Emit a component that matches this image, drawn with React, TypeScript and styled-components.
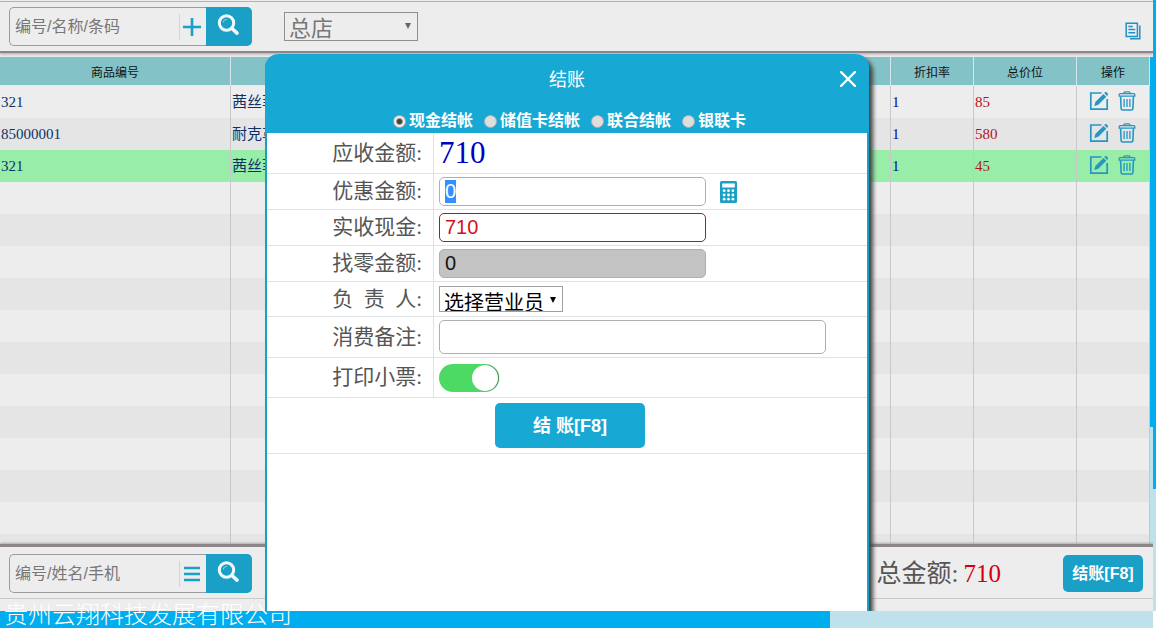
import React, { useEffect, useRef, useState } from "react";
import styled, { createGlobalStyle } from "styled-components";

const sans = `"Liberation Sans", "Noto Sans CJK SC", sans-serif`;
const serif = `"Liberation Serif", "Noto Sans CJK SC", serif`;

const GlobalStyle = createGlobalStyle`
  * { box-sizing: border-box; }
  body { margin: 0; font-family: ${sans}; background: #fff; overflow: hidden; }
  button, input, select { font-family: inherit; margin: 0; }
  button { border: 0; padding: 0; background: none; cursor: pointer; }
`;

const Page = styled.div`
  position: relative;
  display: grid;
  grid-template-columns: minmax(0, 1fr) 3px;
  grid-template-rows: minmax(0, 1fr) 17px;
  height: 100vh;
`;

const Main = styled.main`
  position: relative;
  display: flex;
  flex-direction: column;
  min-height: 0;
  overflow: hidden;
  background: #ededed;
`;

const ScrollTrack = styled.div<{ $vertical?: boolean }>`
  display: flex;
  flex-direction: ${(p) => (p.$vertical ? "column" : "row")};
  background: #bfe1eb;
`;

const ScrollThumb = styled.div<{ $share: number }>`
  flex: 0 0 ${(p) => p.$share}%;
  background: #00adef;
`;

const TopBar = styled.header`
  position: relative;
  display: flex;
  flex: none;
  align-items: flex-start;
  height: 53px;
  padding: 6px 11px 0 9px;
  margin-bottom: 4px;
  border-top: 1px solid #ededed;
  border-bottom: 2px solid #8c8688;
  background: #ededed;
  box-shadow: inset 0 1px #aeb4b4, 0 1px 3px #a8a0a2;
`;

const SearchGroup = styled.form`
  display: flex;
  width: 243px;
  height: 39px;
`;

const SearchBox = styled.div`
  display: flex;
  flex: 1;
  align-items: center;
  min-width: 0;
  border: 1px solid #9a9c9e;
  border-right: 0;
  border-radius: 5px 0 0 5px;
`;

const SearchInput = styled.input`
  flex: 1;
  min-width: 0;
  padding: 0 5px;
  border: 0;
  outline: 0;
  background: none;
  font-size: 16px;
  &::placeholder { color: #777; opacity: 1; }
`;

const InnerButton = styled.button`
  display: flex;
  align-items: center;
  justify-content: center;
  width: 27px;
  height: 26px;
  padding-right: 2px;
  border-left: 1px solid #d4d4d4;
`;

const SearchButton = styled.button`
  display: flex;
  align-items: center;
  justify-content: center;
  width: 46px;
  padding: 0 2px 4px 0;
  border-radius: 0 5px 5px 0;
  background: #1a9fc7;
`;

const SelectWrap = styled.div<{ $store?: boolean }>`
  position: relative;
  width: ${(p) => (p.$store ? 134 : 124)}px;
  margin: ${(p) => (p.$store ? "5px 0 0 32px" : "0")};
`;

const Select = styled.select<{ $store?: boolean }>`
  display: block;
  appearance: none;
  width: 100%;
  height: ${(p) => (p.$store ? 29 : 26)}px;
  padding: 4px 0 0 4px;
  border: 1px solid ${(p) => (p.$store ? "#8f8f8f" : "#a0a0a0")};
  border-radius: 0;
  outline: 0;
  background: ${(p) => (p.$store ? "#ededed" : "#fff")};
  color: ${(p) => (p.$store ? "#777" : "#000")};
  font-size: ${(p) => (p.$store ? 22 : 20)}px;
  line-height: 24px;
`;

const Arrow = styled.svg`
  position: absolute;
  top: 11px;
  right: 7px;
  pointer-events: none;
`;

const CopyButton = styled.button`
  display: flex;
  margin: 15px 0 0 auto;
`;

const GridArea = styled.section`
  display: grid;
  grid-template-columns: minmax(0, 1fr) 3px;
  flex: 1;
  min-height: 0;
  overflow: hidden;
`;

const TableClip = styled.div`
  overflow: hidden;
`;

const Goods = styled.table`
  width: 100%;
  table-layout: fixed;
  border-collapse: separate;
  border-spacing: 0;
`;

const HeadCell = styled.th<{ $width?: number }>`
  width: ${(p) => (p.$width ? `${p.$width}px` : "auto")};
  height: 29px;
  padding: 0;
  border-right: 1px solid #d5e6e8;
  border-bottom: 1px solid #e3eeee;
  background: #83c3c8;
  color: #111;
  font-size: 12px;
  font-weight: 400;
`;

const Body = styled.tbody`
  tr:nth-child(even) { background: #e5e5e5; }
`;

const Row = styled.tr<{ $selected?: boolean }>`
  &&& { ${(p) => (p.$selected ? "background: #98eea9;" : "")} }
`;

const Cell = styled.td<{ $tone?: string }>`
  height: 32px;
  padding: 0 1px;
  border-right: 1px solid #c8c8c8;
  color: ${(p) => p.$tone ?? "#0b3266"};
  font: 15px/20px ${serif};
`;

const Actions = styled.div`
  display: flex;
  gap: 9px;
  padding: 0 0 2px 11px;
  button { display: flex; }
`;

const BottomBar = styled.footer`
  flex: none;
  height: 67px;
  border-top: 3px solid #8c8688;
  box-shadow: 0 -1px 2px #aaa;
  background: #ededed;
`;

const BottomContent = styled.div`
  display: flex;
  align-items: center;
  height: 52px;
  padding: 2px 10px 0 9px;
  border-bottom: 1px solid #c9c9c9;
`;

const Total = styled.div`
  display: flex;
  gap: 5px;
  margin: 0 62px 0 auto;
  color: #555;
  font: 25px/30px ${serif};
  strong { color: #d4000d; font-weight: 400; }
`;

const Primary = styled.button<{ $large?: boolean }>`
  width: ${(p) => (p.$large ? 150 : 80)}px;
  height: ${(p) => (p.$large ? 45 : 37)}px;
  padding-bottom: 3px;
  border-radius: 5px;
  background: ${(p) => (p.$large ? "#17a8d4" : "#1a9fc7")};
  color: #fff;
  font-size: ${(p) => (p.$large ? 18 : 16)}px;
  font-weight: 700;
`;

const Overlay = styled.div`
  position: absolute;
  inset: 54px 0 0;
  display: flex;
  justify-content: center;
  padding-right: 19px;
`;

const Dialog = styled.section`
  display: flex;
  flex-direction: column;
  width: 604px;
  border: 2px solid #1a9fc7;
  border-width: 0 2px;
  border-radius: 14px 14px 0 0;
  background: #fff;
  box-shadow: 4px 4px 4px #444;
`;

const DialogHead = styled.header`
  margin: 0 -2px;
  height: 79px;
  border-radius: 14px 14px 0 0;
  background: #17a8d4;
  color: #fff;
`;

const TitleRow = styled.div`
  display: grid;
  grid-template-columns: 40px 1fr 40px;
  align-items: center;
  height: 52px;
`;

const Title = styled.h1`
  grid-column: 2;
  margin: 0;
  font-size: 18px;
  line-height: 24px;
  font-weight: 400;
  text-align: center;
`;

const CloseButton = styled.button`
  display: flex;
  justify-content: center;
  padding: 0 2px 2px 0;
`;

const PayModes = styled.div`
  display: flex;
  justify-content: center;
  gap: 11px;
  padding-left: 5px;
`;

const Mode = styled.label`
  display: flex;
  align-items: center;
  gap: 3px;
  font-size: 16px;
  line-height: 30px;
  font-weight: 700;
`;

const Radio = styled.input`
  appearance: none;
  width: 13px;
  height: 13px;
  border: 1px solid #b3aeb0;
  border-radius: 50%;
  background: #dedede;
  &:checked {
    background: radial-gradient(circle, #444 0 2px, #eee 4px);
  }
`;

const Field = styled.div<{ $height: number }>`
  display: grid;
  grid-template-columns: 167px 1fr;
  height: ${(p) => p.$height}px;
  border-bottom: 1px solid #dfe3e3;
`;

const FieldLabel = styled.label`
  display: flex;
  align-items: center;
  justify-content: flex-end;
  padding: 0 11px 1px 0;
  border-right: 1px solid #dfe3e3;
  color: #555;
  font: 21px/30px ${serif};
  white-space: pre;
`;

const FieldValue = styled.div`
  display: flex;
  align-items: center;
  gap: 14px;
  padding-left: 5px;
`;

const Amount = styled.output`
  color: #0000c0;
  font: 31px/36px ${serif};
`;

const TextInput = styled.input<{ $tone?: "red" | "gray"; $wide?: boolean }>`
  width: ${(p) => (p.$wide ? 387 : 267)}px;
  height: ${(p) => (p.$wide ? 34 : 29)}px;
  padding: 0 5px;
  border: 1px solid ${(p) => (p.$tone === "red" ? "#c4101a" : "#adb0b2")};
  border-radius: 5px;
  outline: 0;
  background: ${(p) => (p.$tone === "gray" ? "#c3c3c3" : "#fff")};
  color: ${(p) => (p.$tone === "red" ? "#d4121b" : "#111")};
  font-size: 20px;
  &::selection { background: #3390ff; color: #fff; }
`;

const CalcButton = styled.button`
  display: flex;
`;

const Switch = styled.input`
  appearance: none;
  display: flex;
  width: 60px;
  height: 28px;
  padding: 1px;
  border-radius: 14px;
  background: #b9b9b9;
  &::before {
    content: "";
    width: 26px;
    height: 26px;
    border-radius: 50%;
    background: #fff;
    box-shadow: 1px 0 1px #3b8a45;
  }
  &:checked { justify-content: flex-end; background: #4cd964; }
`;

const SubmitRow = styled.div`
  display: flex;
  align-items: center;
  justify-content: center;
  height: 56px;
  padding-left: 6px;
  border-bottom: 1px solid #dfe3e3;
`;

const Company = styled.div`
  position: absolute;
  bottom: 0;
  left: 4px;
  color: #fff;
  font: 300 24px/30px "Noto Sans CJK SC", sans-serif;
  pointer-events: none;
`;

const SearchIcon = () => (
  <svg width="24" height="24" viewBox="0 0 24 24" fill="none" aria-hidden="true">
    <circle cx="10.5" cy="10" r="7.2" stroke="#eefaff" strokeWidth="3" />
    <path d="M16 15.5l5 4.6" stroke="#eefaff" strokeWidth="3.6" strokeLinecap="round" />
    <path d="M7 9.5a4 4 0 0 1 4-3.2" stroke="#8fd0e4" strokeWidth="1" />
  </svg>
);

const PlusIcon = () => (
  <svg width="18" height="18" viewBox="0 0 18 18" aria-hidden="true">
    <path d="M9 0v18M0 9h18" stroke="#1a9fc7" strokeWidth="2.6" />
  </svg>
);

const ListIcon = () => (
  <svg width="16" height="16" viewBox="0 0 16 16" aria-hidden="true">
    <path d="M0 2h16M0 8h16M0 14h16" stroke="#1a9fc7" strokeWidth="2.6" />
  </svg>
);

const CopyIcon = () => (
  <svg width="17" height="18" viewBox="0 0 17 18" fill="none" stroke="#2391c4" strokeWidth="1.5" aria-hidden="true">
    <path d="M1.2 1.2h11.2v13.2H1.2zM3.4 4.5h4.4M3.4 7.6h6.8M3.4 10.8h6.8" />
    <path d="M14.8 3.4v13.4H5" />
  </svg>
);

const EditIcon = () => (
  <svg width="20" height="20" viewBox="0 0 20 20" fill="none" aria-hidden="true">
    <path d="M12.5 2H1.8v16.2h16.4V8" stroke="#2597c4" strokeWidth="1.7" />
    <path d="M5.2 15l1.2-4.1 8-8 2.9 2.9-8 8z" fill="#2597c4" />
    <path d="M15.2 2.1l1.1-1.1c.8-.6 3.3 1.5 2.7 2.7l-1 1.2z" fill="#2597c4" />
  </svg>
);

const TrashIcon = () => (
  <svg width="18" height="20" viewBox="0 0 18 20" fill="none" stroke="#2597c4" aria-hidden="true">
    <path d="M1.2 5.200V3.600q0-1 1-1h13.600q1 0 1 1v1.600z" strokeWidth="1.300" />
    <path d="M5.800 2.500q0-1.700 1.500-1.700h3.400q1.500 0 1.500 1.700" strokeWidth="1.300" />
    <path d="M2.600 5.500l.5 12q.1 1.500 1.500 1.500h8.800q1.400 0 1.500-1.500l.5-12" strokeWidth="1.600" />
    <path d="M6.100 8v8M9 8v8M11.900 8v8" strokeWidth="1.300" />
  </svg>
);

const CloseIcon = () => (
  <svg width="16" height="16" viewBox="0 0 16 16" aria-hidden="true">
    <path d="M1 1l14 14M15 1L1 15" stroke="#fff" strokeWidth="2.4" strokeLinecap="round" />
  </svg>
);

const CalculatorIcon = () => (
  <svg width="17" height="22" viewBox="0 0 17 22" aria-hidden="true">
    <rect width="17" height="22" rx="1.5" fill="#1a9fc7" />
    <rect x="2.2" y="2.5" width="12.6" height="4" fill="#fff" />
    {[9.7, 14, 18.2].map((y) =>
      [4.1, 8.5, 12.9].map((x) => <circle key={`${x}-${y}`} cx={x} cy={y} r="1.4" fill="#fff" />),
    )}
  </svg>
);

const ArrowIcon = ({ color }: { color: string }) => (
  <Arrow width="6" height="6" viewBox="0 0 6 6" aria-hidden="true">
    <path d="M0 0h6L3 6z" fill={color} />
  </Arrow>
);

const goods = [
  { code: "321", name: "茜丝菲", rate: "1", price: "85" },
  { code: "85000001", name: "耐克革", rate: "1", price: "580" },
  { code: "321", name: "茜丝菲", rate: "1", price: "45", selected: true },
];

const payModes = ["现金结帐", "储值卡结帐", "联合结帐", "银联卡"];

const fillerRows = Array.from({ length: 30 }, (_, i) => i);

function SearchForm({ hint, action, children }: { hint: string; action: string; children: React.ReactNode }) {
  return (
    <SearchGroup role="search" onSubmit={(e) => e.preventDefault()}>
      <SearchBox>
        <SearchInput placeholder={hint} aria-label={hint} />
        <InnerButton type="button" aria-label={action}>{children}</InnerButton>
      </SearchBox>
      <SearchButton type="submit" aria-label="搜索"><SearchIcon /></SearchButton>
    </SearchGroup>
  );
}

function Checkout() {
  const [mode, setMode] = useState(payModes[0]);
  const discount = useRef<HTMLInputElement>(null);

  useEffect(() => {
    discount.current?.focus();
    discount.current?.select();
  }, []);

  return (
    <Dialog role="dialog" aria-labelledby="checkout-title">
      <DialogHead>
        <TitleRow>
          <Title id="checkout-title">结账</Title>
          <CloseButton type="button" aria-label="关闭"><CloseIcon /></CloseButton>
        </TitleRow>
        <PayModes>
          {payModes.map((m) => (
            <Mode key={m}>
              <Radio type="radio" name="mode" checked={mode === m} onChange={() => setMode(m)} />
              {m}
            </Mode>
          ))}
        </PayModes>
      </DialogHead>
      <Field $height={41}>
        <FieldLabel htmlFor="due">应收金额:</FieldLabel>
        <FieldValue><Amount id="due">710</Amount></FieldValue>
      </Field>
      <Field $height={36}>
        <FieldLabel htmlFor="discount">优惠金额:</FieldLabel>
        <FieldValue>
          <TextInput id="discount" ref={discount} defaultValue="0" />
          <CalcButton type="button" aria-label="计算器"><CalculatorIcon /></CalcButton>
        </FieldValue>
      </Field>
      <Field $height={36}>
        <FieldLabel htmlFor="cash">实收现金:</FieldLabel>
        <FieldValue><TextInput id="cash" $tone="red" defaultValue="710" /></FieldValue>
      </Field>
      <Field $height={36}>
        <FieldLabel htmlFor="change">找零金额:</FieldLabel>
        <FieldValue><TextInput id="change" $tone="gray" readOnly value="0" /></FieldValue>
      </Field>
      <Field $height={35}>
        <FieldLabel htmlFor="clerk">{"负  责  人:"}</FieldLabel>
        <FieldValue>
          <SelectWrap>
            <Select id="clerk"><option>选择营业员</option></Select>
            <ArrowIcon color="#000" />
          </SelectWrap>
        </FieldValue>
      </Field>
      <Field $height={41}>
        <FieldLabel htmlFor="remark">消费备注:</FieldLabel>
        <FieldValue><TextInput id="remark" $wide /></FieldValue>
      </Field>
      <Field $height={40}>
        <FieldLabel htmlFor="print">打印小票:</FieldLabel>
        <FieldValue><Switch id="print" type="checkbox" defaultChecked /></FieldValue>
      </Field>
      <SubmitRow>
        <Primary type="button" $large>结 账[F8]</Primary>
      </SubmitRow>
    </Dialog>
  );
}

export default function App() {
  return (
    <Page>
      <GlobalStyle />
      <Main>
        <TopBar>
          <SearchForm hint="编号/名称/条码" action="添加商品"><PlusIcon /></SearchForm>
          <SelectWrap $store>
            <Select $store aria-label="店铺"><option>总店</option></Select>
            <ArrowIcon color="#666" />
          </SelectWrap>
          <CopyButton type="button" aria-label="单据"><CopyIcon /></CopyButton>
        </TopBar>
        <GridArea>
          <TableClip>
            <Goods>
              <thead>
                <tr>
                  <HeadCell $width={231}>商品编号</HeadCell>
                  <HeadCell aria-label="商品名称" />
                  <HeadCell $width={83}>折扣率</HeadCell>
                  <HeadCell $width={103}>总价位</HeadCell>
                  <HeadCell $width={73}>操作</HeadCell>
                </tr>
              </thead>
              <Body>
                {goods.map((g, i) => (
                  <Row key={i} $selected={g.selected}>
                    <Cell>{g.code}</Cell>
                    <Cell>{g.name}</Cell>
                    <Cell $tone="#0a0a96">{g.rate}</Cell>
                    <Cell $tone="#b5121b">{g.price}</Cell>
                    <Cell>
                      <Actions>
                        <button type="button" aria-label="编辑"><EditIcon /></button>
                        <button type="button" aria-label="删除"><TrashIcon /></button>
                      </Actions>
                    </Cell>
                  </Row>
                ))}
              </Body>
              <Body aria-hidden="true">
                {fillerRows.map((i) => (
                  <Row key={i}><Cell /><Cell /><Cell /><Cell /><Cell /></Row>
                ))}
              </Body>
            </Goods>
          </TableClip>
          <ScrollTrack $vertical><ScrollThumb $share={76} /></ScrollTrack>
        </GridArea>
        <BottomBar>
          <BottomContent>
            <SearchForm hint="编号/姓名/手机" action="会员列表"><ListIcon /></SearchForm>
            <Total><span>总金额:</span><strong>710</strong></Total>
            <Primary type="button">结账[F8]</Primary>
          </BottomContent>
        </BottomBar>
        <Overlay><Checkout /></Overlay>
      </Main>
      <ScrollTrack $vertical><ScrollThumb $share={80} /></ScrollTrack>
      <ScrollTrack><ScrollThumb $share={72} /></ScrollTrack>
      <Company>贵州云翔科技发展有限公司</Company>
    </Page>
  );
}
